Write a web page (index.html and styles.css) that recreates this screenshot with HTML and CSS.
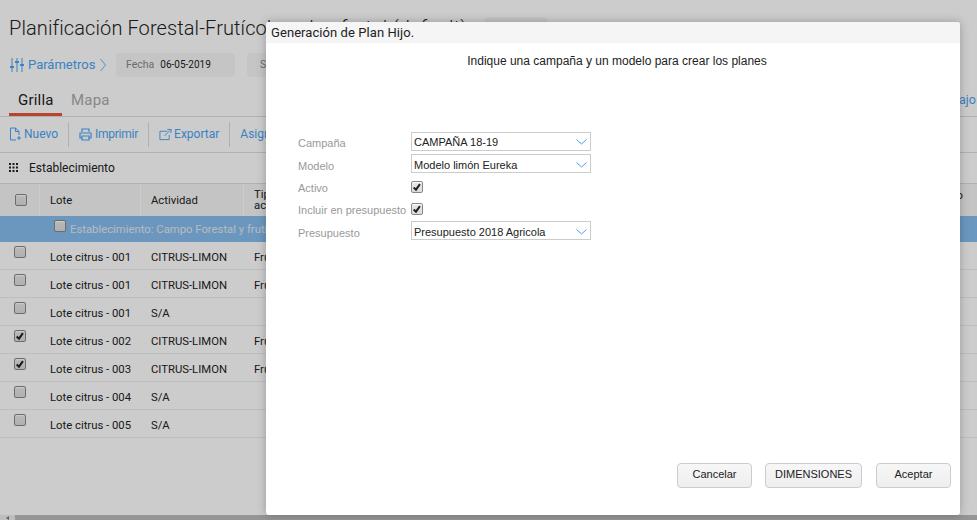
FILE: index.html
```html
<!DOCTYPE html>
<html lang="es">
<head>
<meta charset="utf-8">
<title>Planificación</title>
<link rel="stylesheet" href="styles.css">
</head>
<body>
<div class="page">
  <div class="title-row">
    <h1 class="title">Planificación Forestal-Frutícola - plan frutal (default)</h1>
    <span class="title-pill"></span>
  </div>
  <div class="params">
    <a class="params-link">
      <svg class="ico-sliders" width="14" height="16" viewBox="0 0 14 16"><path d="M2 1v14M7 1v14M12 1v14" stroke="#4aa3f5" stroke-width="1" fill="none"/><path d="M0 10h4M5 5h4M10 8h4" stroke="#4aa3f5" stroke-width="2.200" fill="none"/></svg>
      <span>Parámetros</span>
      <svg width="6" height="14" viewBox="0 0 6 14"><path d="M.5 1l5 6-5 6" stroke="#4aa3f5" stroke-width=".8" fill="none"/></svg>
    </a>
    <div class="pill pill-date"><span class="pill-label">Fecha</span><span class="pill-value">06-05-2019</span></div>
    <div class="pill pill-s"><span class="pill-label">S</span></div>
  </div>
  <div class="tabs">
    <span class="tab tab-active">Grilla</span>
    <span class="tab">Mapa</span>
    <a class="tabs-right">Área de trabajo</a>
  </div>
  <div class="toolbar">
    <a class="tool">
      <svg width="13" height="14" viewBox="0 0 13 14"><path d="M7 13H1.500V1H6.500L10 4.500V8M6.500 1V4.500H10M10 9v4M8 11h4" stroke="#4aa3f5" stroke-width="1" fill="none"/></svg>
      Nuevo</a>
    <a class="tool tool-print">
      <svg width="13" height="13" viewBox="0 0 13 13"><path d="M3 4V1h7v3M3 10H1V5h11v5h-2M3 8h7v4H3z" stroke="#4aa3f5" stroke-width="1.200" fill="none"/></svg>
      Imprimir</a>
    <a class="tool">
      <svg width="13" height="13" viewBox="0 0 14 13"><path d="M9 3H1v9h10V7M6 8l7-7M9 1h4v4" stroke="#4aa3f5" stroke-width="1" fill="none"/></svg>
      Exportar</a>
    <a class="tool">Asignar</a>
  </div>
  <div class="group-row">
    <svg width="9" height="9" viewBox="0 0 9 9"><path d="M0 0h2v2H0zM3.500 0h2v2h-2zM7 0h2v2H7zM0 3.500h2v2H0zM3.500 3.500h2v2h-2zM7 3.500h2v2H7zM0 7h2v2H0zM3.500 7h2v2h-2zM7 7h2v2H7z" fill="#222"/></svg>
    <span>Establecimiento</span>
  </div>
  <div class="thead">
    <div class="c c-check th"><span class="cb"></span></div>
    <div class="c c-lote th">Lote</div>
    <div class="c c-act th">Actividad</div>
    <div class="c c-tipo th th-tipo">Tipo<br>actividad</div>
    <div class="th-end">Rendimiento</div>
  </div>
  <div class="band"><span class="cb"></span><span>Establecimiento: Campo Forestal y frutícola</span></div>
  <div class="row"><div class="c-check"><span class="cb"></span></div><div class="c c-lote">Lote citrus - 001</div><div class="c c-act">CITRUS-LIMON</div><div class="c c-tipo">Frutal</div></div>
  <div class="row"><div class="c-check"><span class="cb"></span></div><div class="c c-lote">Lote citrus - 001</div><div class="c c-act">CITRUS-LIMON</div><div class="c c-tipo">Frutal</div></div>
  <div class="row"><div class="c-check"><span class="cb"></span></div><div class="c c-lote">Lote citrus - 001</div><div class="c c-act">S/A</div><div class="c c-tipo"></div></div>
  <div class="row"><div class="c-check"><span class="cb"><svg viewBox="0 0 12 12"><path d="M2 6.500L4.800 9.200 9.500 2.500" stroke="#222" stroke-width="2.400" fill="none"/></svg></span></div><div class="c c-lote">Lote citrus - 002</div><div class="c c-act">CITRUS-LIMON</div><div class="c c-tipo">Frutal</div></div>
  <div class="row"><div class="c-check"><span class="cb"><svg viewBox="0 0 12 12"><path d="M2 6.500L4.800 9.200 9.500 2.500" stroke="#222" stroke-width="2.400" fill="none"/></svg></span></div><div class="c c-lote">Lote citrus - 003</div><div class="c c-act">CITRUS-LIMON</div><div class="c c-tipo">Frutal</div></div>
  <div class="row"><div class="c-check"><span class="cb"></span></div><div class="c c-lote">Lote citrus - 004</div><div class="c c-act">S/A</div><div class="c c-tipo"></div></div>
  <div class="row"><div class="c-check"><span class="cb"></span></div><div class="c c-lote">Lote citrus - 005</div><div class="c c-act">S/A</div><div class="c c-tipo"></div></div>
  <div class="spacer"></div>
  <div class="hscroll"><span class="hscroll-arrow"></span><span class="hscroll-bar"></span></div>
</div>
<div class="overlay"></div>
<div class="modal">
  <div class="modal-head">Generación de Plan Hijo.</div>
  <p class="modal-intro">Indique una campaña y un modelo para crear los planes</p>
  <div class="form">
    <label class="lbl lbl-first">Campaña</label>
    <div class="select select-first">CAMPAÑA 18-19<svg width="11" height="6" viewBox="0 0 11 6"><path d="M.5.5l5 4.500 5-4.500" stroke="#4a9bf0" stroke-width="1" fill="none"/></svg></div>
    <label class="lbl">Modelo</label>
    <div class="select">Modelo limón Eureka<svg width="11" height="6" viewBox="0 0 11 6"><path d="M.5.5l5 4.500 5-4.500" stroke="#4a9bf0" stroke-width="1" fill="none"/></svg></div>
    <label class="lbl">Activo</label>
    <div class="check-cell"><span class="cb"><svg viewBox="0 0 12 12"><path d="M2 6.500L4.800 9.200 9.500 2.500" stroke="#222" stroke-width="2.400" fill="none"/></svg></span></div>
    <label class="lbl">Incluir en presupuesto</label>
    <div class="check-cell"><span class="cb"><svg viewBox="0 0 12 12"><path d="M2 6.500L4.800 9.200 9.500 2.500" stroke="#222" stroke-width="2.400" fill="none"/></svg></span></div>
    <label class="lbl">Presupuesto</label>
    <div class="select">Presupuesto 2018 Agricola<svg width="11" height="6" viewBox="0 0 11 6"><path d="M.5.5l5 4.500 5-4.500" stroke="#4a9bf0" stroke-width="1" fill="none"/></svg></div>
  </div>
  <div class="modal-actions">
    <button class="btn btn-side">Cancelar</button>
    <button class="btn btn-mid">DIMENSIONES</button>
    <button class="btn btn-side">Aceptar</button>
  </div>
</div>
</body>
</html>
```
FILE: styles.css
```css
* { box-sizing: border-box; }
html, body { margin: 0; height: 520px; overflow: hidden; }
body { position: relative; width: 977px; background: #fff; font-family: Roboto, sans-serif; color: #222; }
.page { height: 520px; display: flex; flex-direction: column; background: #fff; }
.title-row { height: 53px; display: flex; align-items: flex-start; padding: 16px 0 0 9px; gap: 18px; }
.title { margin: 0; font-size: 20px; font-weight: 300; line-height: 25px; letter-spacing: .1px; white-space: nowrap; color: #222; }
.title-pill { width: 62px; height: 24px; margin-top: 1px; background: #f5f5f5; border-radius: 4px; }
.params { height: 24px; display: flex; align-items: center; padding-left: 10px; }
.params-link { display: flex; align-items: center; gap: 4px; width: 106px; padding-bottom: 1px; color: #4aa3f5; font-size: 13px; }
.params-link span { margin-right: 1px; }
.pill { height: 24px; display: flex; align-items: center; background: #f7f7f7; border-radius: 4px; font-size: 10.500px; padding-bottom: 1px; }
.pill-date { width: 119px; padding-left: 10px; gap: 6px; }
.pill-s { width: 80px; margin-left: 12px; padding-left: 13px; }
.pill-label { color: #888; }
.pill-value { color: #222; font-size: 10px; }
.tabs { height: 40px; display: flex; align-items: flex-end; padding-left: 9px; border-bottom: 1px solid #ddd; }
.tab { font-size: 15px; height: 31px; padding: 6px 9px 0; color: #aaa; letter-spacing: .2px; }
.tab-active { color: #222; border-bottom: 3px solid #e6553b; width: 53px; }
.tabs-right { margin-left: auto; align-self: center; margin-top: 6px; color: #4aa3f5; font-size: 12.500px; white-space: nowrap; margin-right: 1px; }
.toolbar { height: 36px; display: flex; align-items: center; padding-left: 9px; padding-bottom: 1px; border-bottom: 1px solid #ddd; }
.tool { display: flex; align-items: center; gap: 2px; color: #4aa3f5; font-size: 12px; height: 25px; padding-right: 10px; margin-right: 10px; border-right: 1px solid #ddd; }
.tool:last-child { border-right: 0; }
.tool-print { gap: 3px; letter-spacing: -.25px; }
.group-row { height: 31px; display: flex; align-items: center; gap: 11px; padding-left: 9px; padding-bottom: 1px; font-size: 12px; border-bottom: 1px solid #ddd; }
.thead { height: 32px; display: flex; background: #f5f5f5; }
.c { flex: none; white-space: nowrap; overflow: hidden; font-size: 11.300px; }
.c-check { width: 40px; flex: none; }
.c-lote { width: 101px; padding-left: 10px; }
.c-act { width: 103px; padding-left: 10px; }
.c-tipo { width: 60px; padding-left: 10px; }
.th { display: flex; align-items: center; border-right: 1px solid #fff; }
.th .cb { margin-left: 15px; }
.th-tipo { line-height: 11px; display: block; padding-top: 5px; border-right: 0; }
.th-end { margin-left: auto; padding-top: 5px; font-size: 11.300px; white-space: nowrap; margin-right: 14px; }
.cb { display: block; width: 12px; height: 12px; border: 1px solid #888; border-radius: 2px; background: linear-gradient(#e8e8e8, #dcdcdc); flex: none; box-shadow: inset 0 1px 1px #fff; }
.cb svg { display: block; width: 10px; height: 10px; }
.band { height: 26px; background: #86bdef; color: #e4eaf0; font-size: 11.300px; display: flex; align-items: center; padding-left: 54px; gap: 4px; }
.band .cb { margin-top: -6px; }
.row { height: 28px; display: flex; align-items: center; border-bottom: 1px solid #eee; }
.row .c { padding-top: 4px; }
.row .c-check { align-self: flex-start; padding: 4px 0 0 14px; }
.spacer { flex: 1; }
.hscroll { height: 5px; display: flex; background: #eee; }
.hscroll-arrow { width: 15px; display: flex; align-items: flex-end; justify-content: center; }
.hscroll-arrow::before { content: ""; border-right: 3px solid #777; border-top: 2px solid transparent; border-bottom: 2px solid transparent; }
.hscroll-bar { flex: 1; background: #bbb; }
.overlay { position: absolute; inset: 0; background: rgba(0, 0, 0, .2); }
.modal { position: absolute; left: 266px; top: 22px; width: 694px; height: 493px; background: #fff; border-radius: 3px; box-shadow: 0 0 10px rgba(0, 0, 0, .25); display: flex; flex-direction: column; font-family: "Liberation Sans", sans-serif; }
.modal-head { height: 21px; background: #f5f5f5; border-radius: 3px 3px 0 0; padding-left: 5px; font-family: Roboto, sans-serif; font-size: 13px; line-height: 21px; letter-spacing: .07px; color: #222; }
.modal-intro { margin: 11px 0 0; padding-left: 8px; text-align: center; font-size: 12px; line-height: 14px; color: #222; }
.form { margin: 64px 0 0 32px; display: grid; grid-template-columns: 113px 180px; grid-template-rows: 19px 19px 19px 20px 19px; row-gap: 3px; font-size: 11px; }
.lbl { color: #999; font-size: 11px; display: flex; align-items: center; padding-top: 4px; white-space: nowrap; }
.lbl-first { padding-top: 2px; }
.select { height: 19px; border: 1px solid #ccc; background: #fff; display: flex; align-items: center; justify-content: space-between; padding: 2px 3px 0 2px; color: #222; }
.select-first { padding-top: 0; }
.check-cell { display: flex; align-items: flex-start; padding-top: 5px; }
.modal-actions { margin-top: auto; padding: 0 9px 27px 0; display: flex; justify-content: flex-end; gap: 14px; }
.btn { height: 25px; border: 1px solid #ccc; border-radius: 4px; background: linear-gradient(#f7f7f7, #eee); font-family: "Liberation Sans", sans-serif; font-size: 11px; color: #222; padding: 0 0 4px; }
.btn-side { width: 75px; }
.btn-side:first-child { margin-right: -1px; }
.btn-mid { width: 97px; }
```
